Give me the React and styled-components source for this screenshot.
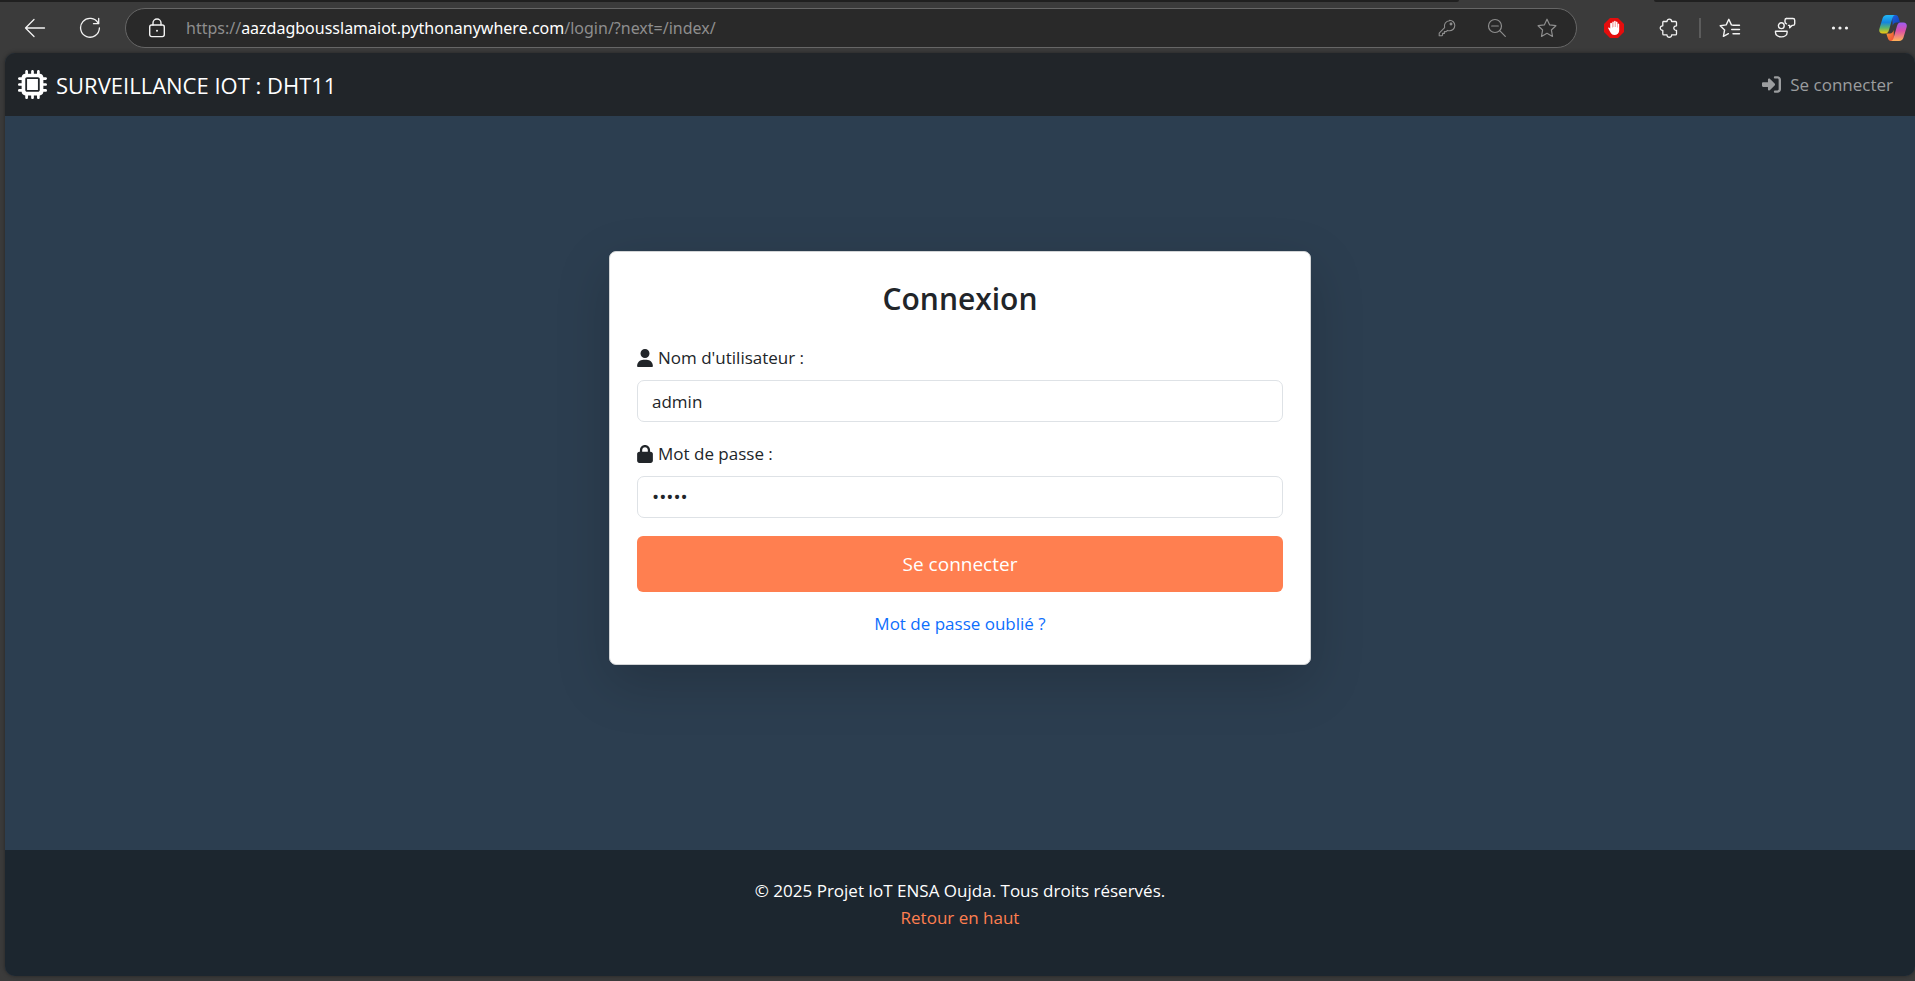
import React from "react";
import styled, { createGlobalStyle } from "styled-components";
import { FaMicrochip, FaUser, FaLock, FaRightToBracket } from "react-icons/fa6";

const GlobalStyle = createGlobalStyle`
  *, *::before, *::after { box-sizing: border-box; }
  html { background: #3b3b3b; }
  body {
    margin: 0;
    font-family: "Segoe UI", "Open Sans", "Noto Sans", sans-serif;
    font-size: 17px;
    line-height: 27px;
    color: #212529;
  }
  h1, p { margin: 0; }
  button, input { font: inherit; }
`;

const Browser = styled.div`
  min-height: 100vh;
  display: flex;
  flex-direction: column;
  background: #3b3b3b;
`;

const TabStrip = styled.div`
  display: flex;
  height: 2px;
`;

const TabGap = styled.div`
  flex: ${(p) => p.$grow};
  background: #202020;
  border-radius: ${(p) => (p.$side === "left" ? "0 0 2px 0" : "0 0 0 2px")};
`;

const ActiveTab = styled.div`
  width: 195px;
`;

const Toolbar = styled.header`
  display: flex;
  align-items: center;
  height: 51px;
  padding: 0 6px 0 17px;
`;

const IconButton = styled.button`
  display: flex;
  align-items: center;
  justify-content: center;
  flex: none;
  width: ${(p) => p.$width || 36}px;
  height: 36px;
  padding: 0;
  border: 0;
  background: none;
  color: ${(p) => (p.$dim ? "#8e8e8e" : "#f2f2f2")};
`;

const NavButtons = styled.div`
  display: flex;
  gap: 19px;
  margin-right: 17px;
`;

const AddressBar = styled.div`
  flex: 1;
  display: flex;
  align-items: center;
  height: 40px;
  padding: 0 11px 0 13px;
  border: 1px solid #666;
  border-radius: 20px;
  background: #292929;
`;

const Url = styled.div`
  flex: 1;
  margin-left: 11px;
  font-family: "Segoe UI", "Noto Sans", sans-serif;
  font-size: 16px;
  line-height: 24px;
  white-space: nowrap;
  color: #8e8e8e;
  outline: none;
`;

const Host = styled.span`
  color: #fff;
`;

const AddressActions = styled.div`
  display: flex;
  gap: 14px;
`;

const Extensions = styled.div`
  display: flex;
  align-items: center;
  gap: 19px;
  margin: 0 12px 0 19px;
`;

const Separator = styled.div`
  width: 2px;
  height: 20px;
  background: #5c5c5c;
`;

const BrowserActions = styled.div`
  display: flex;
  gap: 19px;
  margin-left: 11px;
`;

const Page = styled.div`
  flex: 1;
  display: flex;
  flex-direction: column;
  margin: 0 0 5px 5px;
  border-radius: 10px;
  overflow: hidden;
  background: #2c3e50;
  box-shadow: 0 0 4px rgba(0, 0, 0, 0.4);
`;

const Navbar = styled.nav`
  display: flex;
  align-items: center;
  justify-content: space-between;
  height: 63px;
  padding: 0 22px 0 13px;
  background: #212529;
`;

const Brand = styled.a`
  display: flex;
  align-items: center;
  gap: 9px;
  font-size: 22px;
  line-height: 34px;
  color: #fff;
  text-decoration: none;
`;

const NavLink = styled.a`
  display: flex;
  align-items: center;
  gap: 9px;
  color: #9b9d9f;
  text-decoration: none;
`;

const Main = styled.main`
  flex: 1;
  padding: 135px 20px 80px;
`;

const Card = styled.form`
  display: flex;
  flex-direction: column;
  gap: 18px;
  width: 100%;
  max-width: 702px;
  margin: 0 auto;
  padding: 27px;
  border: 1px solid #d2d4d6;
  border-radius: 7px;
  background: #fff;
  box-shadow: 0 18px 54px rgba(0, 0, 0, 0.175);
`;

const Title = styled.h1`
  margin-bottom: 7px;
  font-size: 30px;
  font-weight: 600;
  line-height: 40px;
  text-align: center;
`;

const Field = styled.div`
  display: flex;
  flex-direction: column;
  gap: 9px;
`;

const Label = styled.label`
  display: flex;
  align-items: center;
  gap: 5px;

  svg {
    width: 16px;
    height: 18px;
  }
`;

const Input = styled.input`
  width: 100%;
  height: 42px;
  padding: 0 14px;
  border: 1px solid #dee2e6;
  border-radius: 7px;
  background: #fff;
  color: #212529;
  outline: none;

  &[type="password"] {
    font-size: 19px;
  }
`;

const Submit = styled.button`
  height: 56px;
  border: 0;
  border-radius: 6px;
  background: #ff7f50;
  color: #fff;
  font-size: 19px;
`;

const TextLink = styled.a`
  align-self: center;
  color: ${(p) => p.$color};
  text-decoration: none;
`;

const Footer = styled.footer`
  display: flex;
  flex-direction: column;
  align-items: center;
  padding: 27px 20px 45px;
  background: #1c262f;
  color: #fff;
`;

const Line = ({ w = 20, h = 20, children, sw = 1.3 }) => (
  <svg width={w} height={h} viewBox={`0 0 ${w} ${h}`} fill="none" stroke="currentColor"
    strokeWidth={sw} strokeLinecap="round" strokeLinejoin="round" aria-hidden="true">
    {children}
  </svg>
);

const BackIcon = () => (
  <Line w={22} h={20}><path d="M20.5 10H1.5M10 1.5 1.5 10l8.5 8.5" /></Line>
);
const ReloadIcon = () => (
  <Line w={22} h={22}>
    <path d="M19.2 6.2A9.4 9.4 0 1 0 20.4 11M19.7 1.5v5.2h-5.2" />
  </Line>
);
const SiteLockIcon = () => (
  <Line w={18} h={20} sw={1.4}>
    <rect x="1.7" y="7" width="14.6" height="11.6" rx="2" />
    <path d="M5 7V5a4 4 0 0 1 8 0v2" />
    <circle cx="9" cy="12.8" r="1" fill="currentColor" stroke="none" />
  </Line>
);
const KeyIcon = () => (
  <Line w={18} h={18} sw={1.1}>
    <path d="M11.500 1.200a5.300 5.300 0 0 1 0 10.600c-.8 0-1.500-.1-2.100-.4L8.200 12.600H6.400v1.800H4.600v1.600l-.8.8H1.200v-2.700l5.400-5.400a5.300 5.300 0 0 1 4.900-6.900Z" />
    <circle cx="13" cy="5" r=".9" fill="currentColor" />
  </Line>
);
const ZoomOutIcon = () => (
  <Line w={20} h={20} sw={1.2}>
    <circle cx="8" cy="8" r="6.5" /><path d="M4.7 8h6.6M12.7 12.7l5.6 5.600" />
  </Line>
);
const StarIcon = () => (
  <Line w={20} h={20} sw={1.2}>
    <path d="m10 1.200 2.700 5.700 6.200.8-4.500 4.300 1.100 6.400L10 15.300l-5.500 3.100L5.600 12 1.100 7.700l6.200-.8Z" />
  </Line>
);
const AdblockIcon = () => (
  <svg width="20" height="20" viewBox="0 0 20 20" aria-hidden="true">
    <path d="M6 0h8l6 6v8l-6 6H6l-6-6V6Z" fill="#e40d0d" />
    <path d="M6.200 5.400v5.200L5.300 9.700c-.7-.5-1.400.1-1 .8l2.500 4.600c.8 1.300 1.800 1.900 3.500 1.900 2.900 0 4.900-1.800 4.900-4.700V6.200c0-1-1.400-1-1.400 0v3.200h-.3V4.200c0-1-1.500-1-1.500 0v4.900h-.3V3.400c0-1-1.600-1-1.600 0v5.700h-.3V4.200c0-1-1.500-1-1.500 0v5.200H8V5.400c0-1-1.800-1-1.800 0Z" fill="#fff" />
  </svg>
);
const PuzzleIcon = () => (
  <Line sw={1.3}>
    <path d="M4.300 3.500H8c0-3.300 4.600-3.300 4.600 0h3.900c.6 0 1 .4 1 1v3.300c-3.600-.2-3.600 4.600 0 4.500v3.600c0 .6-.4 1-1 1h-3.900c.1 3.100-4.700 3.100-4.600 0H4.800c-.6 0-1-.4-1-1v-3.600c-3.400.1-3.400-4.700 0-4.500V4.500c0-.5.2-1 .5-1Z" />
  </Line>
);
const FavoritesIcon = () => (
  <Line w={22} h={20} sw={1.4}>
    <path d="M14.200 7.200 12.400 6.900 9.800 1.300 7.200 6.900 1.200 7.700l4.400 4.300-1.200 6.400 5-2.700M14 7.200h6.500M12.700 11.500h7.800M14 15.800h6.500" />
  </Line>
);
const CollaborateIcon = () => (
  <Line w={22} h={22} sw={1.4}>
    <circle cx="7.3" cy="8.7" r="2.9" />
    <path d="M1.500 14.200h11.600v1.200c0 6-11.600 6-11.600 0ZM12.500 1.500h6.500c1 0 1.700.7 1.700 1.700v3.500c0 1-.7 1.700-1.700 1.700h-1l-2.300 2.400V8.400h-1.200" />
    <path d="M12.500 1.500c-1 0-1.500.7-1.500 1.700v1.600c0 1 .5 1.700 1.500 2" />
  </Line>
);
const MoreIcon = () => (
  <svg width="18" height="4" viewBox="0 0 18 4" fill="currentColor" aria-hidden="true">
    <circle cx="2.5" cy="2" r="1.6" /><circle cx="9" cy="2" r="1.6" /><circle cx="15.5" cy="2" r="1.6" />
  </svg>
);
const CopilotIcon = () => (
  <svg width="28" height="26" viewBox="0 0 28 26" aria-hidden="true">
    <defs>
      <linearGradient id="cpA" x1="0" y1="0" x2="0" y2="1">
        <stop offset="0" stopColor="#22b8f5" /><stop offset=".4" stopColor="#1485df" />
        <stop offset=".7" stopColor="#5db56b" /><stop offset="1" stopColor="#f4c80c" />
      </linearGradient>
      <linearGradient id="cpB" x1="0" y1="0" x2="0" y2="1">
        <stop offset="0" stopColor="#9d5cf2" /><stop offset=".45" stopColor="#dc4fa6" />
        <stop offset="1" stopColor="#ffb357" />
      </linearGradient>
      <linearGradient id="cpC" x1="0" y1="0" x2="1" y2="1">
        <stop offset="0" stopColor="#1d62dc" /><stop offset="1" stopColor="#123bb5" />
      </linearGradient>
      <linearGradient id="cpD" x1="0" y1="0" x2="1" y2="1">
        <stop offset="0" stopColor="#f7a43a" /><stop offset="1" stopColor="#ef4536" />
      </linearGradient>
    </defs>
    <path d="M13 0h3.500c2 0 2.800 1.500 3.400 3.700L21 7.500h-3.500c-2.300 0-3.200 1.400-3.800 3.300Z" fill="url(#cpC)" />
    <path d="M7.300 18.500H11c2 0 3-1.400 3.600-3.500l.5 11h-3c-2 0-3-1.500-3.600-3.700Z" fill="url(#cpD)" />
    <path d="M8 0h8.500c-1.800 0-2.600 1.500-3.200 3.600L10 15c-.7 2.200-1.500 3.500-3.500 3.500h-3C.8 18.500-.3 16.500.4 13.800L3.500 3.500C4.200 1.200 5.500 0 8 0Z" fill="url(#cpA)" />
    <path d="M20 26h-8.500c1.800 0 2.600-1.500 3.200-3.600L18 11c.7-2.200 1.500-3.500 3.500-3.500h3c2.700 0 3.800 2 3.100 4.700l-3.100 10.300C23.800 24.800 22.500 26 20 26Z" fill="url(#cpB)" />
  </svg>
);

export default function App() {
  return (
    <Browser>
      <GlobalStyle />
      <TabStrip>
        <TabGap $grow={1459} $side="left" />
        <ActiveTab />
        <TabGap $grow={261} $side="right" />
      </TabStrip>
      <Toolbar>
        <NavButtons>
          <IconButton aria-label="Retour"><BackIcon /></IconButton>
          <IconButton aria-label="Actualiser"><ReloadIcon /></IconButton>
        </NavButtons>
        <AddressBar>
          <IconButton aria-label="Informations sur le site"><SiteLockIcon /></IconButton>
          <Url role="textbox" aria-label="Adresse" tabIndex={0}>
            https://<Host>aazdagbousslamaiot.pythonanywhere.com</Host>/login/?next=/index/
          </Url>
          <AddressActions>
            <IconButton $dim aria-label="Mots de passe"><KeyIcon /></IconButton>
            <IconButton $dim aria-label="Zoom"><ZoomOutIcon /></IconButton>
            <IconButton $dim aria-label="Ajouter aux favoris"><StarIcon /></IconButton>
          </AddressActions>
        </AddressBar>
        <Extensions>
          <IconButton aria-label="Bloqueur de publicités"><AdblockIcon /></IconButton>
          <IconButton aria-label="Extensions"><PuzzleIcon /></IconButton>
        </Extensions>
        <Separator />
        <BrowserActions>
          <IconButton aria-label="Favoris"><FavoritesIcon /></IconButton>
          <IconButton aria-label="Profil"><CollaborateIcon /></IconButton>
          <IconButton aria-label="Paramètres"><MoreIcon /></IconButton>
          <IconButton $width={32} aria-label="Copilot"><CopilotIcon /></IconButton>
        </BrowserActions>
      </Toolbar>
      <Page>
        <Navbar>
          <Brand href="#accueil"><FaMicrochip size={29} />SURVEILLANCE IOT : DHT11</Brand>
          <NavLink href="#connexion"><FaRightToBracket size={19} />Se connecter</NavLink>
        </Navbar>
        <Main>
          <Card id="connexion" onSubmit={(e) => e.preventDefault()}>
            <Title>Connexion</Title>
            <Field>
              <Label htmlFor="username"><FaUser />Nom d'utilisateur :</Label>
              <Input id="username" type="text" defaultValue="admin" />
            </Field>
            <Field>
              <Label htmlFor="password"><FaLock />Mot de passe :</Label>
              <Input id="password" type="password" defaultValue="admin" />
            </Field>
            <Submit type="submit">Se connecter</Submit>
            <TextLink href="#oubli" $color="#0d6efd">Mot de passe oublié ?</TextLink>
          </Card>
        </Main>
        <Footer>
          <p>© 2025 Projet IoT ENSA Oujda. Tous droits réservés.</p>
          <TextLink href="#accueil" $color="#ff7f50">Retour en haut</TextLink>
        </Footer>
      </Page>
    </Browser>
  );
}
